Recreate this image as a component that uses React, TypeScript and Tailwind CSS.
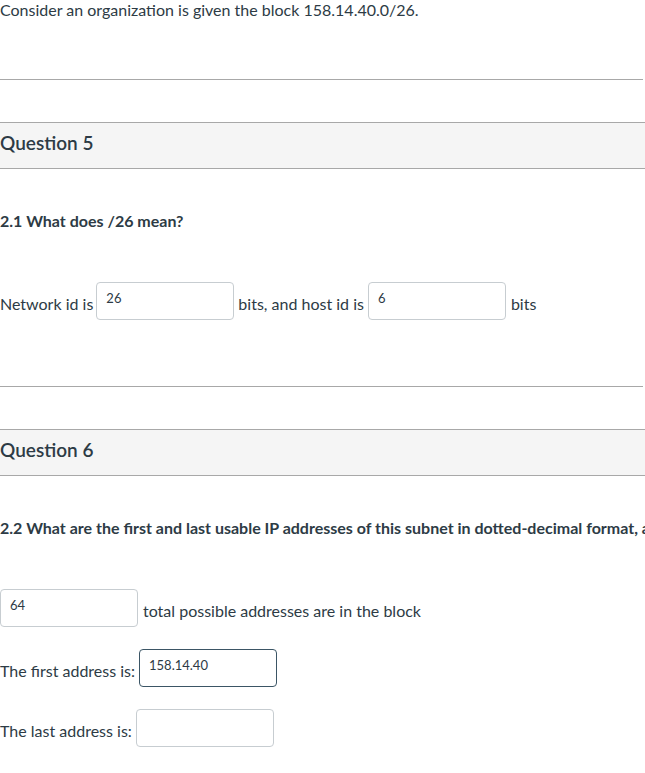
const inputBase =
	"h-[38px] w-[138px] rounded-[4px] border bg-white px-[9px] pb-[12px] pt-[6px] text-[13px] text-[#2d3b45] outline-none";

const Field = ({ value, focused = false }: { value?: string; focused?: boolean }) => (
	<input
		type="text"
		defaultValue={value}
		className={`${inputBase} ${focused ? "border-[#3b5565]" : "border-[#c7cdd1]"}`}
	/>
);

const QuestionHeader = ({ title }: { title: string }) => (
	<div className="flex h-[47px] items-center border-y border-[#a8a8a8] bg-[#f5f5f5] pb-[4px]">
		<h2 className="text-[19px] font-semibold text-[#2d3b45]">{title}</h2>
	</div>
);

export default function App() {
	return (
		<div
			className="min-h-[773px] w-[645px] overflow-hidden bg-white text-[16px] text-[#2d3b45]"
			style={{ fontFamily: "Lato, 'Open Sans', sans-serif" }}
		>
			<p className="h-[20px] leading-[20px]">Consider an organization is given the block 158.14.40.0/26.</p>

			<div className="mt-[59px] h-px w-[643px] bg-[#a8a8a8]" />

			<div className="mt-[42px]">
				<QuestionHeader title="Question 5" />
			</div>

			<p className="mt-[42px] h-[20px] font-bold leading-[20px]">2.1 What does /26 mean?</p>

			<div className="mt-[51px] flex items-center">
				<span className="pr-[3px] pt-[6px]">Network id is</span>
				<Field value="26" />
				<span className="px-[4px] pt-[6px]">bits, and host id is</span>
				<Field value="6" />
				<span className="pl-[5px] pt-[6px]">bits</span>
			</div>

			<div className="mt-[66px] h-px w-[643px] bg-[#a8a8a8]" />

			<div className="mt-[42px]">
				<QuestionHeader title="Question 6" />
			</div>

			<p className="mt-[42px] h-[20px] whitespace-nowrap font-bold leading-[20px]">
				2.2 What are the first and last usable IP addresses of this subnet in dotted-decimal format, and how many addresses are there?
			</p>

			<div className="mt-[51px] flex items-center">
				<Field value="64" />
				<span className="pl-[5px] pt-[6px]">total possible addresses are in the block</span>
			</div>

			<div className="mt-[22px] flex items-center">
				<span className="pr-[4px] pt-[6px]">The first address is:</span>
				<Field value="158.14.40" focused />
			</div>

			<div className="mt-[22px] flex items-center">
				<span className="pr-[4px] pt-[6px]">The last address is:</span>
				<Field />
			</div>
		</div>
	);
}
